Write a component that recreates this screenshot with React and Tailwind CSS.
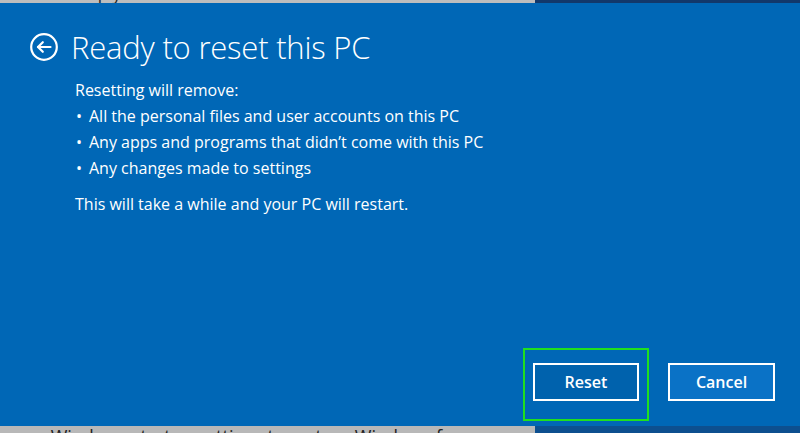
export default function App() {
  const font = { fontFamily: '"Open Sans", "Noto Sans", "Liberation Sans", sans-serif' };
  return (
    <div className="w-[800px] h-[433px] flex flex-col overflow-hidden" style={font}>
      <div className="h-[3px] flex shrink-0">
        <div className="w-[535px] bg-[#bdbdbd] overflow-hidden relative">
          <div className="absolute left-[-4px] top-[-14px] text-[17px] leading-[16px] text-[#222] whitespace-nowrap">
            hoose to keep your files or remove them and then reinstalls
          </div>
        </div>
        <div className="flex-1 bg-[#12386b]"></div>
      </div>

      <div className="flex-1 bg-[#0067b6] flex flex-col pl-[30px] pt-[27px] pr-[25px] pb-[25px] text-white">
        <div className="flex items-center">
          <svg width="28" height="28" viewBox="0 0 28 28" fill="none" stroke="white" strokeWidth="2.2" strokeLinecap="round" strokeLinejoin="round">
            <circle cx="14" cy="14" r="12.8" />
            <path d="M20.5 14H8" />
            <path d="M12.8 9.2L8 14l4.8 4.8" />
          </svg>
          <div className="ml-[13px] text-[31px] leading-[34px] font-light tracking-[-0.2px]">Ready to reset this PC</div>
        </div>

        <div className="pl-[45px] mt-[13px] text-[16px] leading-[26px]">
          <div>Resetting will remove:</div>
          <div className="flex"><span className="w-[14px] pl-[1px]">•</span><span>All the personal files and user accounts on this PC</span></div>
          <div className="flex"><span className="w-[14px] pl-[1px]">•</span><span>Any apps and programs that didn’t come with this PC</span></div>
          <div className="flex"><span className="w-[14px] pl-[1px]">•</span><span>Any changes made to settings</span></div>
          <div className="mt-[10px]">This will take a while and your PC will restart.</div>
        </div>

        <div className="mt-auto flex justify-end gap-[29px]">
          <div className="relative">
            <button className="w-[106px] h-[38px] border-2 border-white bg-[#0062ad] text-[16px] font-semibold text-white">Reset</button>
            <span className="absolute left-[-10px] right-[-10px] top-[-15px] bottom-[-20px] border-2 border-[#1fe01f] pointer-events-none"></span>
          </div>
          <button className="w-[107px] h-[38px] border-2 border-white bg-[#0a72c6] text-[16px] font-semibold text-white">Cancel</button>
        </div>
      </div>

      <div className="h-[7px] flex shrink-0">
        <div className="w-[535px] bg-[#b8b8b8] overflow-hidden relative">
          <div className="absolute left-[-6px] top-[1px] text-[18px] leading-[18px] text-[#222] whitespace-nowrap">
            hange Windows startup settings to restore Windows from a
          </div>
        </div>
        <div className="flex-1 bg-[#0d4f8f]"></div>
      </div>
    </div>
  );
}
